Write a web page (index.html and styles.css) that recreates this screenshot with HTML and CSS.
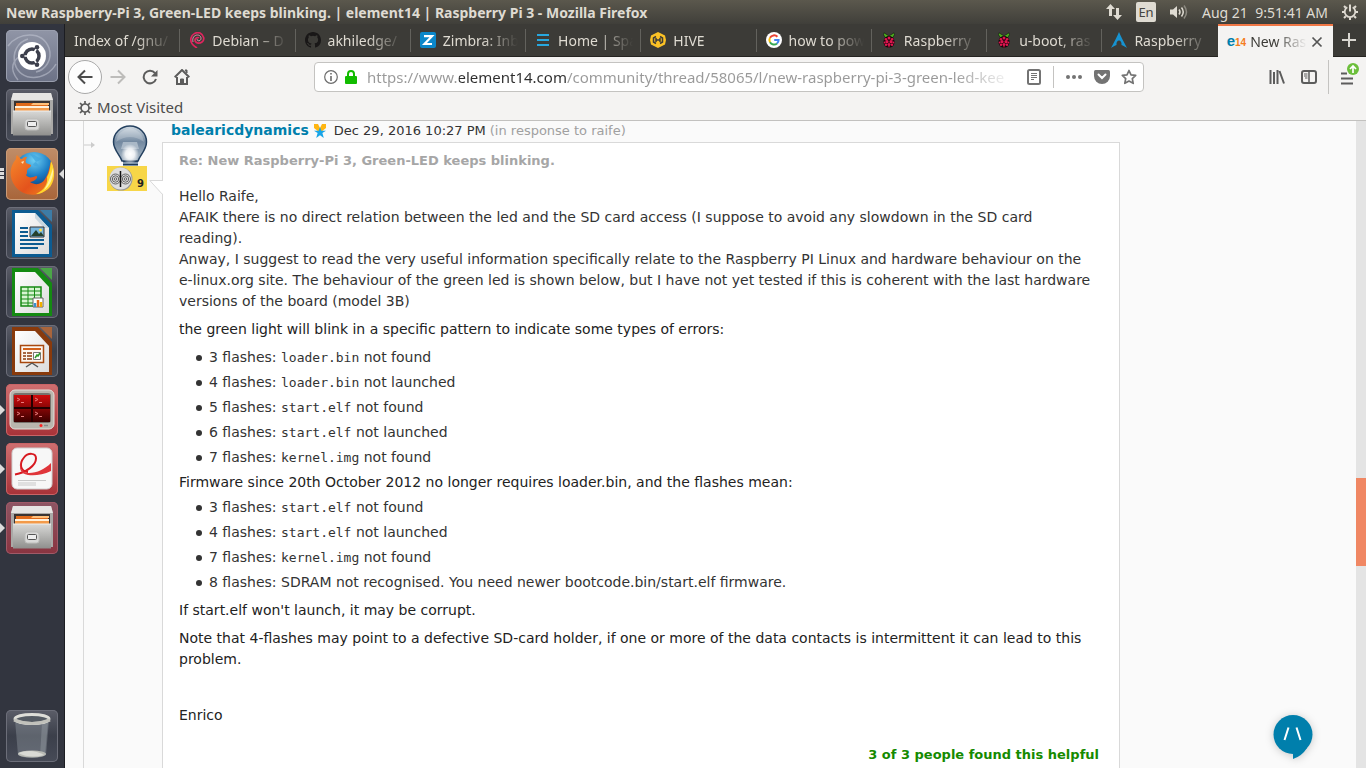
FILE: index.html
```html
<!DOCTYPE html>
<html lang="en">
<head>
<meta charset="utf-8">
<title>New Raspberry-Pi 3, Green-LED keeps blinking. | element14 | Raspberry Pi 3</title>
<link rel="stylesheet" href="styles.css">
</head>
<body>
<svg class="defs" aria-hidden="true">
  <defs>
    <linearGradient id="metal" x1="0" y1="0" x2="0" y2="1"><stop offset="0" stop-color="#d8d8d6"/><stop offset="1" stop-color="#8f8f8d"/></linearGradient>
    <linearGradient id="paper" x1="0" y1="0" x2="1" y2="1"><stop offset="0" stop-color="#fff"/><stop offset="1" stop-color="#dcdcdc"/></linearGradient>
    <radialGradient id="globe" cx=".5" cy=".2" r=".8"><stop offset="0" stop-color="#6fd0f4"/><stop offset=".5" stop-color="#1a7cc4"/><stop offset="1" stop-color="#0a2f6b"/></radialGradient>
    <linearGradient id="fox" x1="0" y1="0" x2="1" y2="1"><stop offset="0" stop-color="#f58a2c"/><stop offset=".6" stop-color="#e4531c"/><stop offset="1" stop-color="#f08a1f"/></linearGradient>
    <linearGradient id="glass" x1="0" y1="0" x2="0" y2="1"><stop offset="0" stop-color="#cfd9e2"/><stop offset=".45" stop-color="#7389a0"/><stop offset="1" stop-color="#a9b8c6"/></linearGradient>
    <radialGradient id="glow"><stop offset="0" stop-color="#fff"/><stop offset=".5" stop-color="#fff" stop-opacity=".85"/><stop offset="1" stop-color="#fff" stop-opacity="0"/></radialGradient>
    <linearGradient id="red" x1="0" y1="0" x2="0" y2="1"><stop offset="0" stop-color="#d00c0c"/><stop offset="1" stop-color="#3a0000"/></linearGradient>
  </defs>
  <symbol id="cabinet" viewBox="0 0 52 52">
    <path d="M7 4h38l2 7v34H5V11z" fill="#aaa9a7"/>
    <path d="M7 4h38l2 7H5z" fill="#e6e5e3"/>
    <path d="M8 12h36v12H8z" fill="#3a3432"/>
    <path d="M10 14h32v10H10z" fill="#e06a1a"/>
    <path d="M10 16h15l2-2h16v2H10z" fill="#ffc07a"/>
    <path d="M9 17h34v2H9z" fill="#fff1dc"/>
    <path d="M9 19h34v4H9z" fill="#f39a49"/>
    <path d="M7 22h38v24.500H7z" fill="url(#metal)"/>
    <path d="M7 22h38" stroke="#efefee"/>
    <rect x="19" y="30" width="14" height="11" rx="2.500" fill="#d9d9d8" stroke="#bdbdbb"/>
    <rect x="21.500" y="32.500" width="9" height="5" rx="1" fill="#eee" stroke="#555"/>
  </symbol>
  <symbol id="raspberry" viewBox="0 0 16 16">
    <path d="M8 4L3 .8 2.500 2.500l1.500 3 4-.5 4 .5 1.500-3L13 .8z" fill="#4cae1e" stroke="#111" stroke-width=".6"/>
    <path d="M8 4c3 0 5.500 2.500 5.500 6S11 15.700 8 15.700 2.500 13.500 2.500 10 5 4 8 4z" fill="#16060a"/>
    <g fill="#e0154f"><circle cx="8" cy="6" r="1.500"/><circle cx="4.900" cy="7.200" r="1.300"/><circle cx="11.100" cy="7.200" r="1.300"/><circle cx="6" cy="9.700" r="1.600"/><circle cx="10" cy="9.700" r="1.600"/><circle cx="3.600" cy="10.500" r=".9"/><circle cx="12.400" cy="10.500" r=".9"/><circle cx="8" cy="12.600" r="1.500"/><circle cx="5" cy="12.800" r="1.200"/><circle cx="11" cy="12.800" r="1.200"/><circle cx="8" cy="14.800" r=".7"/></g>
  </symbol>
</svg>

<header class="panel">
  <h1 class="window-title">New Raspberry-Pi 3, Green-LED keeps blinking. | element14 | Raspberry Pi 3 - Mozilla Firefox</h1>
  <div class="indicators">
    <button class="indicator" aria-label="Network"><svg width="18" height="18" viewBox="0 0 18 18" fill="#dfdbd2"><path d="M5.500 1L10 6H7v7H4V6H1z"/><path d="M12.500 17L8 12h3V5h3v7h3z"/></svg></button>
    <button class="indicator lang">En</button>
    <button class="indicator" aria-label="Sound"><svg width="20" height="16" viewBox="0 0 20 16"><path d="M1 5.500h3L8 2v12l-4-3.500H1z" fill="#dfdbd2"/><path d="M10 5.500q2 2.500 0 5M12.500 3.500q3.500 4.500 0 9" fill="none" stroke="#dfdbd2" stroke-width="1.500"/><path d="M15 1.500q5 6.500 0 13" fill="none" stroke="#8c8980" stroke-width="1.500"/></svg></button>
    <button class="indicator clock">Aug 21&nbsp; 9:51:41 AM</button>
    <button class="indicator" aria-label="System"><svg width="18" height="18" viewBox="0 0 18 18" fill="none" stroke="#dfdbd2"><path d="M6.300 4.200a5.300 5.300 0 1 0 5.400 0" stroke-width="1.800"/><path d="M9 1.500v7" stroke-width="2"/><path d="M4.800 4.800L3 3M13.200 4.800L15 3M3.600 9H1M14.400 9H17M4.800 13.200L3 15M13.200 13.200L15 15M9 14.500V17" stroke-width="2"/></svg></button>
  </div>
</header>

<div class="desktop">
  <nav class="launcher" aria-label="Launcher">
    <button class="tile tile-dash" aria-label="Search"><svg viewBox="0 0 52 52"><g fill="none" stroke="#c3c7d4" stroke-width="1.500" opacity=".55"><path d="M2 16C12 2 36 0 43 18c4 12-4 22-13 24"/><path d="M50 34C40 52 14 52 9 34 6 22 12 12 22 9"/><path d="M12 50C2 38 8 30 14 26"/></g><circle cx="26" cy="26" r="14" fill="#fff"/><circle cx="26" cy="26" r="7" fill="none" stroke="#3c3f4c" stroke-width="3.500"/><g stroke="#fff" stroke-width="1.500"><path d="M26 26h-12M26 26l6-10M26 26l6 10"/></g><circle cx="26" cy="26" r="4.500" fill="#fff"/><g fill="#3c3f4c"><circle cx="16.300" cy="26" r="2.300"/><circle cx="31" cy="17.300" r="2.300"/><circle cx="31" cy="34.700" r="2.300"/></g></svg></button>
    <button class="tile" aria-label="Files"><svg><use href="#cabinet"/></svg></button>
    <button class="tile tile-fox running3 focused" aria-label="Firefox"><svg viewBox="0 0 52 52"><circle cx="28" cy="24" r="20" fill="url(#globe)"/><path d="M24 6c6 0 6 4 12 4-2 4-8 3-9 7 4 2 7 1 9 5" fill="#3fa5de" opacity=".7"/><path d="M45 13c5 9 4 22-3 28-10 9-26 7-33-3C3 30 3 19 10 11c0-1 0-3 1-4 2 2 3 4 5 4 2-2 3-2 5-2-1 2-2 4-1 6 1 1 4 1 5 2 0 3-4 3-4 6 0 2 0 3-1 4 3 4 7 2 10 1 3 0 0 5-6 6 6 4 12 2 15-3 4-6 4-11 6-18z" fill="url(#fox)"/><path d="M45 13c5 9 4 22-3 28-4 3-8 5-12 5 9-4 12-11 11-17 3-5 3-10 4-16z" fill="#ffd52e"/><path d="M47 20c1 9-3 18-9 22 4-6 6-13 9-22z" fill="#fff3a0"/><path d="M15 14l3-1-1 3z" fill="#ffe1b5"/></svg></button>
    <button class="tile" aria-label="LibreOffice Writer"><svg viewBox="0 0 52 52"><path d="M6 3h26l14 15v32H6z" fill="#0c5b91"/><path d="M34 3h12v12z" fill="#3d7ca6"/><path d="M9 6h20l14 15v26H9z" fill="url(#paper)"/><path d="M29 6l14 15h-5L29 11z" fill="#c9d7e0"/><path d="M14 21h8M14 25h8M14 29h8M14 33h24M14 37h24M14 41h18" stroke="#0c5b91" stroke-width="2"/><path d="M24 20h14v10H24z" fill="#78b7e0" stroke="#333"/><path d="M25 29l5-6 3 4 2-2 3 4z" fill="#25412d"/><circle cx="34.500" cy="23" r="1.500" fill="#ffdd45"/></svg></button>
    <button class="tile" aria-label="LibreOffice Calc"><svg viewBox="0 0 52 52"><path d="M6 2h26l14 15v33H6z" fill="#148a12"/><path d="M34 2h12v12z" fill="#4ba648"/><path d="M9 6h20l14 15v26H9z" fill="url(#paper)"/><path d="M15 21h20v19H15z" fill="#d8f5d2" stroke="#158912" stroke-width="1.500"/><path d="M15 25h20M15 29h20M15 33h20M15 37h20M22 21v19M28.500 21v19" stroke="#158912"/><path d="M27 32h10v9H27z" fill="#fff" stroke="#666"/><path d="M29 41v-4" stroke="#3b8fd0" stroke-width="2.500"/><path d="M32 41v-7" stroke="#e66714" stroke-width="2.500"/><path d="M35 41v-5" stroke="#f0b000" stroke-width="2.500"/></svg></button>
    <button class="tile" aria-label="LibreOffice Impress"><svg viewBox="0 0 52 52"><path d="M6 2h26l14 15v33H6z" fill="#893a0c"/><path d="M34 2h12v12z" fill="#a9653c"/><path d="M9 6h20l14 15v26H9z" fill="url(#paper)"/><path d="M14.500 20.500h23v17h-23z" fill="#fdf6ef" stroke="#a8480f" stroke-width="1.500"/><path d="M17 24h18" stroke="#d2601a" stroke-width="2"/><path d="M17 28h3M17 31h3M17 34h3M21 28h5M21 31h5M21 34h5" stroke="#8a3a0c" stroke-width="1.500"/><path d="M27.500 27.500h7v7h-7z" fill="#fff" stroke="#777"/><path d="M29 33l2-3 1 1 2-3" stroke="#2e9a2b" fill="none" stroke-width="1.500"/><path d="M26 38l-6 4M26 38l6 4" stroke="#555" stroke-width="1.500"/></svg></button>
    <button class="tile tile-red running" aria-label="Terminator"><svg viewBox="0 0 52 52"><rect x="4" y="6" width="44" height="39" rx="5" fill="#b9b6ae" stroke="#e2e0da"/><rect x="7" y="9" width="38" height="30" rx="3" fill="#77736d"/><path d="M8 11h36v27H8z" fill="url(#red)"/><path d="M26 11v27M8 24h36" stroke="#240000" stroke-width="2"/><g fill="none" stroke="#e87c7c"><path d="M11 14l3 1.500-3 1.500M15 18.500h3M29 14l3 1.500-3 1.500M33 18.500h3M11 28l3 1.500-3 1.500M15 32.500h3M29 28l3 1.500-3 1.500M33 32.500h3"/></g><circle cx="35" cy="41.500" r="1.500" fill="#ff2020"/><path d="M38 41.500h4" stroke="#888" stroke-width="1.500"/></svg></button>
    <button class="tile tile-red running" aria-label="Document Viewer"><svg viewBox="0 0 52 52"><rect x="6" y="5" width="40" height="41" rx="5" fill="#f7f7f7" stroke="#cfcfcf"/><path d="M9 31.500c11-2 21-9 21-16 0-6-8-6-12-1-5 6-4 14 4 14.500" fill="none" stroke="#d71920" stroke-width="2"/><path d="M16 18c-3 6-1 12 7 12 8 0 16-4 22-10v8c-8 4-17 5-23 4-8-1-10-8-6-14z" fill="#e0353a"/><path d="M12 37.500h28M12 40h18M12 42h18" stroke="#c9c9c9"/></svg></button>
    <button class="tile tile-wine running" aria-label="File Manager"><svg><use href="#cabinet"/></svg></button>
    <button class="tile tile-trash" aria-label="Trash"><svg viewBox="0 0 52 52"><path d="M9 10l3 35c5 4 23 4 28 0l3-35z" fill="#a8b0b8" opacity=".32"/><path d="M36 13l-2 33 5-1 3-33z" fill="#bcc3c9" opacity=".25"/><ellipse cx="26" cy="44" rx="14" ry="3.500" fill="#b9bbb5"/><path d="M12 43q14-5 26 2-14 4-26-2z" fill="#d9dad5"/><ellipse cx="26" cy="9" rx="17" ry="4.500" fill="#555b63" stroke="#deded8" stroke-width="3"/><path d="M8 10q18 7 36 0" fill="none" stroke="#c1c1bb" stroke-width="3"/></svg></button>
  </nav>

  <div class="browser">
    <div class="tabs" role="tablist">
      <button class="tab" role="tab"><span class="label">Index of /gnu/</span></button>
      <button class="tab" role="tab"><svg class="fav" viewBox="0 0 16 16" fill="none" stroke="#e0245e"><path d="M8 16C3 13 1 10 2 6c1-4 5-6 9-5 4 2 5 7 2 9-3 2-7 1-7-2 0-2 3-3 4-2" stroke-width="1.700"/><path d="M4 10C3 6 5 3 8.500 3 12 3 13 7 11 8.500 9 9.500 7.500 8 8.500 7" stroke="#f4a9bf" stroke-width=".8"/></svg><span class="label">Debian – D</span></button>
      <button class="tab" role="tab"><svg class="fav" viewBox="0 0 16 16"><path fill="#191717" d="M8 0C3.580 0 0 3.580 0 8c0 3.540 2.290 6.530 5.470 7.590.4.070.55-.17.55-.38v-1.490c-2.010.37-2.530-.49-2.690-.94-.09-.23-.48-.94-.82-1.130-.28-.15-.68-.52-.01-.53.63-.01 1.080.58 1.230.82.72 1.210 1.870.87 2.330.66.07-.52.28-.87.51-1.070-1.780-.2-3.640-.89-3.640-3.950 0-.87.310-1.590.82-2.150-.08-.2-.36-1.020.08-2.120 0 0 .67-.21 2.200.82a7.600 7.600 0 0 1 4 0c1.530-1.040 2.200-.82 2.200-.82.44 1.100.16 1.920.08 2.120.51.56.82 1.270.82 2.150 0 3.070-1.870 3.750-3.650 3.950.29.25.54.73.54 1.480v2.200c0 .21.150.46.55.38A8 8 0 0 0 16 8c0-4.420-3.580-8-8-8z"/></svg><span class="label">akhiledge/</span></button>
      <button class="tab" role="tab"><svg class="fav" viewBox="0 0 16 16"><rect width="16" height="16" rx="2" fill="#0b87c9"/><path d="M4 4.200h8L4.500 12H12" fill="none" stroke="#fff" stroke-width="2.200"/></svg><span class="label">Zimbra: Inb</span></button>
      <button class="tab" role="tab"><svg class="fav" viewBox="0 0 16 16"><path d="M2 3h12M2 8h12M2 13h12" stroke="#27a7df" stroke-width="2.200"/></svg><span class="label">Home | Spa</span></button>
      <button class="tab" role="tab"><svg class="fav" viewBox="0 0 16 16"><path d="M8 0l7 3.500 1 4.500-1 4.500L8 16l-7-3.500L0 8l1-4.500z" fill="#fcc225"/><path d="M6 4.500L3.500 6v4L6 11.500M10 4.500L12.500 6v4L10 11.500M6 6v4M10 6v4M6 8h4" fill="none" stroke="#3c3b37" stroke-width="1.500"/></svg><span class="label">HIVE</span></button>
      <button class="tab" role="tab"><svg class="fav" viewBox="0 0 16 16" fill="none" stroke-width="2"><circle cx="8" cy="8" r="8" fill="#fff"/><path d="M11.400 4.800A4.600 4.600 0 0 0 4 5.800" stroke="#ea4335"/><path d="M4 5.800a4.600 4.600 0 0 0 0 4.400" stroke="#fbbc05"/><path d="M4 10.200a4.600 4.600 0 0 0 7 1.300" stroke="#34a853"/><path d="M11 11.500A4.600 4.600 0 0 0 12.600 8H8.200" stroke="#4285f4"/></svg><span class="label">how to pow</span></button>
      <button class="tab" role="tab"><svg class="fav"><use href="#raspberry"/></svg><span class="label">Raspberry</span></button>
      <button class="tab" role="tab"><svg class="fav"><use href="#raspberry"/></svg><span class="label">u-boot, ras</span></button>
      <button class="tab" role="tab"><svg class="fav" viewBox="0 0 16 16"><path d="M8 0c2 5 5 10 8 16-2-1.500-4-2.500-5.500-3 .3-3-1-4.500-2.500-4.500S5.200 10 5.500 13C4 13.500 2 14.500 0 16 3 10 6 5 8 0z" fill="#1793d1"/></svg><span class="label">Raspberry</span></button>
      <button class="tab active" role="tab" aria-selected="true"><span class="fav-e14"><b>e</b><i>14</i></span><span class="label">New Ras</span><svg class="close" width="12" height="12" viewBox="0 0 12 12"><path d="M1.500 1.500l9 9M10.500 1.500l-9 9" stroke="#555" stroke-width="1.700"/></svg></button>
      <button class="new-tab" aria-label="New tab"><svg width="14" height="14" viewBox="0 0 14 14"><path d="M7 0v14M0 7h14" stroke="#d8d6d0" stroke-width="2"/></svg></button>
    </div>

    <div class="toolbar">
      <div class="nav-buttons">
        <button class="tool back" aria-label="Back"><svg width="16" height="16" viewBox="0 0 16 16" fill="none" stroke="#4c4c4c" stroke-width="2"><path d="M15.500 8H1.500M8 1.500L1.500 8 8 14.500"/></svg></button>
        <button class="tool" aria-label="Forward"><svg width="16" height="16" viewBox="0 0 16 16" fill="none" stroke="#bdbcba" stroke-width="2"><path d="M.5 8h14M8 1.500L14.500 8 8 14.500"/></svg></button>
        <button class="tool" aria-label="Reload"><svg width="16" height="16" viewBox="0 0 16 16"><path d="M13 4.200A6.300 6.300 0 1 0 14 10" fill="none" stroke="#5c5c5c" stroke-width="2"/><path d="M15.500 1v6.500H9z" fill="#5c5c5c"/></svg></button>
        <button class="tool" aria-label="Home"><svg width="16" height="16" viewBox="0 0 16 16"><path d="M.7 8.300L8 1l7.300 7.300M3 8v7h10V8" fill="none" stroke="#5c5c5c" stroke-width="2"/><path d="M6.500 15v-5h3v5M11 1h2v3z" fill="#5c5c5c" stroke="#5c5c5c"/></svg></button>
      </div>
      <div class="urlbar">
        <svg width="14" height="14" viewBox="0 0 14 14" fill="none" stroke="#6c6c6c"><circle cx="7" cy="7" r="6.300" stroke-width="1.200"/><path d="M7 6v5M7 3v1.600" stroke-width="1.600"/></svg>
        <svg width="12" height="14" viewBox="0 0 12 14"><path d="M3 7V4a3 3 0 0 1 6 0v3" fill="none" stroke="#12bc00" stroke-width="2"/><rect y="6" width="12" height="8" rx="1" fill="#12bc00"/></svg>
        <input class="url" type="text" aria-label="Address" value="https://www.element14.com/community/thread/58065/l/new-raspberry-pi-3-green-led-kee">
        <button class="mini" aria-label="Reader view"><svg width="14" height="16" viewBox="0 0 14 16" fill="none" stroke="#737373"><rect x="1" y="1" width="12" height="14" rx="1.500" stroke-width="2"/><path d="M4 4.500h6M4 6.500h6M4 8.500h6M4 10.500h3"/></svg></button>
        <span class="divider"></span>
        <button class="mini" aria-label="Page actions"><svg width="18" height="16" viewBox="0 0 18 16" fill="#737373"><circle cx="3" cy="8" r="2"/><circle cx="9" cy="8" r="2"/><circle cx="15" cy="8" r="2"/></svg></button>
        <button class="mini" aria-label="Pocket"><svg width="16" height="14" viewBox="0 0 16 14"><path d="M1.500 0h13Q16 0 16 1.500V6a8 8 0 0 1-16 0V1.500Q0 0 1.500 0z" fill="#737373"/><path d="M4.500 4.500L8 8l3.500-3.500" fill="none" stroke="#fff" stroke-width="2" stroke-linecap="round"/></svg></button>
        <button class="mini" aria-label="Bookmark"><svg width="16" height="16" viewBox="0 0 16 16"><path d="M8 1.500l2 4.300 4.700.6-3.400 3.200.9 4.700L8 12l-4.200 2.300.9-4.700L1.300 6.400 6 5.800z" fill="none" stroke="#737373" stroke-width="1.700" stroke-linejoin="round"/></svg></button>
      </div>
      <div class="right-tools">
        <button class="mini" aria-label="Library"><svg width="16" height="14" viewBox="0 0 16 14" stroke="#5c5c5c" stroke-width="2"><path d="M1.500 0v14M5 2v12M8.500 0v14M10.500 1L15 13.500" fill="none"/></svg></button>
        <button class="mini" aria-label="Sidebars"><svg width="16" height="14" viewBox="0 0 16 14" fill="none" stroke="#5c5c5c"><rect x="1" y="1" width="14" height="12" rx="2" stroke-width="2"/><path d="M8 1v12" stroke-width="1.500"/><path d="M3 4h3.500M3 6h3.500M4 8h2.500"/></svg></button>
        <span class="divider tall"></span>
        <button class="mini menu" aria-label="Menu"><svg width="20" height="24" viewBox="0 0 20 24"><path d="M1 11.500h6M1 16.500h12M1 21.500h12" stroke="#5c5c5c" stroke-width="2"/><circle cx="13" cy="7" r="6" fill="#6cbf3c"/><path d="M13 11V4.500M10 7l3-3 3 3" fill="none" stroke="#fff" stroke-width="1.700"/></svg></button>
      </div>
    </div>

    <div class="bookmarks">
      <button class="bookmark"><svg width="14" height="14" viewBox="0 0 14 14" fill="none" stroke="#5c5c5c"><circle cx="7" cy="7" r="4" stroke-width="1.700"/><path d="M7 0v3M7 11v3M0 7h3M11 7h3M2 2l2.200 2.200M9.800 9.800L12 12M12 2L9.800 4.200M4.200 9.800L2 12" stroke-width="1.700"/></svg>Most Visited</button>
    </div>

    <div class="viewport">
      <main class="thread">
        <div class="gutter">
          <svg class="branch" width="11" height="6" viewBox="0 0 11 6"><path d="M0 3h8" stroke="#ccc"/><path d="M7 0l4 3-4 3z" fill="#ccc"/></svg>
          <div class="avatar">
            <svg width="36" height="41" viewBox="0 0 36 41"><path d="M11 34h15v7H11z" fill="#7d93a8"/><path d="M11 36.500h15M11 39.500h15" stroke="#1e3a5a"/><path d="M18 1c9.500 0 16.500 7.500 16.500 16 0 8-6.500 13-8.500 19H10C8 30 1.500 25 1.500 17 1.500 8.500 8.500 1 18 1z" fill="url(#glass)" stroke="#24405f" stroke-width="1.500"/><path d="M4 17q14-10 28 0Q30 5 18 3 6 5 4 17z" fill="#fff" opacity=".2"/><path d="M11 17h14l2 7H9z" fill="#b6c3cf" opacity=".8"/><ellipse cx="18" cy="29" rx="9" ry="10" fill="url(#glow)"/></svg>
            <div class="rank"><svg width="26" height="24" viewBox="0 0 26 24"><circle cx="14" cy="12" r="11.500" fill="#999"/><circle cx="13.500" cy="11.500" r="11" fill="#dedede"/><g fill="none" stroke="#444" stroke-width=".8"><circle cx="8.500" cy="12" r="5"/><circle cx="18.500" cy="12" r="5"/><circle cx="8.500" cy="12" r="3.200"/><circle cx="18.500" cy="12" r="3.200"/><circle cx="8.500" cy="12" r="1.300"/><circle cx="18.500" cy="12" r="1.300"/></g><path d="M13.500 4v16" stroke="#111" stroke-width="1.500"/></svg><span>9</span></div>
          </div>
        </div>
        <article class="post">
          <div class="byline">
            <a class="author" href="#">balearicdynamics</a>
            <svg width="14" height="14" viewBox="0 0 14 14"><path d="M1 0h4l2 4 2-4h4v4L8 8H6L1 4z" fill="#ffb612"/><path d="M7 3l1.300 3.700H13L9.400 9l1.400 5L7 11.300 3.200 14l1.400-5L1 6.700h4.700z" fill="#18a5e8"/></svg>
            <time class="date">Dec 29, 2016 10:27 PM</time>
            <a class="reply-to" href="#">(in response to raife)</a>
          </div>
          <div class="bubble">
            <svg class="pointer" width="15" height="16" viewBox="0 0 15 16"><path d="M15 .5H1L15 15.500z" fill="#fff"/><path d="M14 .5H.8L14 15" fill="none" stroke="#d9d9d9"/></svg>
            <h2 class="subject">Re: New Raspberry-Pi 3, Green-LED keeps blinking.</h2>
            <p class="grey">Hello Raife,<br>AFAIK there is no direct relation between the led and the SD card access (I suppose to avoid any slowdown in the SD card reading).<br>Anway, I suggest to read the very useful information specifically relate to the Raspberry PI Linux and hardware behaviour on the e-linux.org site. The behaviour of the green led is shown below, but I have not yet tested if this is coherent with the last hardware versions of the board (model 3B)</p>
            <p class="spaced">the green light will blink in a specific pattern to indicate some types of errors:</p>
            <ul class="codes spaced">
              <li>3 flashes: <code>loader.bin</code> not found</li>
              <li>4 flashes: <code>loader.bin</code> not launched</li>
              <li>5 flashes: <code>start.elf</code> not found</li>
              <li>6 flashes: <code>start.elf</code> not launched</li>
              <li>7 flashes: <code>kernel.img</code> not found</li>
            </ul>
            <p class="firmware">Firmware since 20th October 2012 no longer requires loader.bin, and the flashes mean:</p>
            <ul class="codes">
              <li>3 flashes: <code>start.elf</code> not found</li>
              <li>4 flashes: <code>start.elf</code> not launched</li>
              <li>7 flashes: <code>kernel.img</code> not found</li>
              <li>8 flashes: SDRAM not recognised. You need newer bootcode.bin/start.elf firmware.</li>
            </ul>
            <p class="spaced">If start.elf won't launch, it may be corrupt.</p>
            <p class="spaced">Note that 4-flashes may point to a defective SD-card holder, if one or more of the data contacts is intermittent it can lead to this problem.</p>
            <p class="signature">Enrico</p>
            <p class="helpful">3 of 3 people found this helpful</p>
          </div>
        </article>
      </main>
      <div class="scrollbar"><div class="thumb"></div></div>
      <button class="chat" aria-label="Chat"><svg width="40" height="45" viewBox="0 0 40 45"><circle cx="20" cy="19.500" r="19.500" fill="#007fac"/><path d="M20 36v8q9-3 14-11z" fill="#007fac"/><path d="M15.500 12.500L11.500 25M23.500 12.500L27.500 25" stroke="#fff" stroke-width="2"/></svg></button>
    </div>
  </div>
</div>
</body>
</html>
```
FILE: styles.css
```css
* { box-sizing: border-box; margin: 0; padding: 0; }
button { border: 0; background: none; font: inherit; color: inherit; }
svg { display: block; flex: none; }
a { text-decoration: none; }

body {
  height: 100vh;
  display: flex;
  flex-direction: column;
  overflow: hidden;
  font-family: "DejaVu Sans", sans-serif;
  font-size: 14px;
  line-height: 21px;
  background: #fafafa;
}
.defs { position: absolute; width: 0; height: 0; }

/* top panel */
.panel {
  flex: none;
  height: 24px;
  padding: 0 7px 0 6px;
  display: flex;
  align-items: center;
  justify-content: space-between;
  background: linear-gradient(#5b584d, #403f3a);
  color: #dfdbd2;
  font-family: "Noto Sans", sans-serif;
}
.window-title { font-size: 14px; font-weight: 700; white-space: nowrap; }
.indicators { display: flex; align-items: center; gap: 13px; }
.lang {
  width: 20px;
  height: 20px;
  border-radius: 2px;
  background: #dfdbd2;
  color: #45443f;
  font-size: 13px;
  line-height: 20px;
}
.clock { font-size: 14px; white-space: nowrap; }

.desktop { flex: 1; min-height: 0; display: flex; }

/* launcher */
.launcher {
  flex: none;
  width: 65px;
  padding: 6px 6px 6px;
  display: flex;
  flex-direction: column;
  gap: 7px;
  background: #32353f;
  border-right: 1px solid #1c1d22;
}
.tile {
  position: relative;
  width: 52px;
  height: 52px;
  flex: none;
  border-radius: 5px;
  background: linear-gradient(#5b5d68, #3b3f4a 50%, #474b57);
  box-shadow: inset 0 0 0 1px #6c6e79;
}
.tile svg { width: 52px; height: 52px; }
.tile-dash { background: linear-gradient(#9095a6, #6c7286); box-shadow: inset 0 0 0 1px #9a9fae; }
.tile-fox { background: linear-gradient(#c08d68, #a8653a); box-shadow: inset 0 0 0 1px #c99b78; }
.tile-red { background: linear-gradient(#cf6f70, #a83238); box-shadow: inset 0 0 0 1px #c96466; }
.tile-wine { background: linear-gradient(#8d5563, #8a3440); box-shadow: inset 0 0 0 1px #a05a68; }
.tile-trash { margin-top: auto; }
.running::before, .focused::after {
  content: "";
  position: absolute;
  top: 21px;
  border: 5px solid transparent;
}
.running::before { left: -6px; border-left-color: #dcdcdc; border-right-width: 0; }
.focused::after { right: -6px; border-right-color: #dcdcdc; border-left-width: 0; }
.running3::before {
  content: "";
  position: absolute;
  left: -6px;
  top: 20px;
  width: 4px;
  height: 11px;
  background: repeating-linear-gradient(#dcdcdc 0 3px, transparent 3px 4px);
}

/* browser chrome */
.browser {
  flex: 1;
  min-width: 0;
  display: flex;
  flex-direction: column;
  font-family: "Noto Sans", sans-serif;
}
.tabs { flex: none; height: 33px; display: flex; background: #3c3b37; border-bottom: 1px solid #252421; }
.tab {
  position: relative;
  flex: 1 1 0;
  min-width: 0;
  padding: 0 4px 0 9px;
  display: flex;
  align-items: center;
  gap: 7px;
  color: #dfdbd2;
  font-size: 14px;
  text-align: left;
}
.tab + .tab:not(.active)::before {
  content: "";
  position: absolute;
  left: -1px;
  top: 5px;
  bottom: 4px;
  width: 1px;
  background: #63625d;
}
.fav { width: 16px; height: 16px; }
.label {
  flex: 1;
  min-width: 0;
  overflow: hidden;
  white-space: nowrap;
  mask-image: linear-gradient(to left, transparent 4px, #000 40px);
}
.active { height: 33px; background: #f4f3f2; color: #3c3b37; border-top: 2px solid #f07746; gap: 4px; }
.active .label { mask-image: linear-gradient(to left, transparent, #000 32px); }
.fav-e14 { font-family: "Liberation Sans", sans-serif; font-size: 15px; font-weight: 700; color: #007fac; }
.fav-e14 i { font-size: 10px; font-style: normal; color: #f47c20; }
.close { margin-right: 6px; }
.new-tab { width: 33px; display: grid; place-items: center; }

.toolbar {
  flex: none;
  height: 40px;
  padding: 0 6px 0 3px;
  display: flex;
  align-items: center;
  background: #f4f3f2;
}
.nav-buttons { display: flex; align-items: center; flex: none; width: 246px; }
.tool { width: 32px; height: 32px; display: grid; place-items: center; }
.back { width: 34px; height: 34px; border: 1px solid #a9a9a9; border-radius: 50%; background: #fdfdfd; }
.urlbar {
  flex: 1;
  min-width: 0;
  height: 30px;
  padding: 0 6px 0 9px;
  display: flex;
  align-items: center;
  gap: 7px;
  border: 1px solid #c4c3c1;
  border-radius: 4px;
  background: #fff;
}
.url {
  flex: 1;
  min-width: 0;
  height: 24px;
  margin: 0 6px 0 3px;
  border: 0;
  outline: 0;
  font: 15px "Noto Sans", sans-serif;
  color: transparent;
  background: linear-gradient(to right, #999 92px, #2e2e2e 92px 199px, #999 199px calc(100% - 60px), transparent);
  -webkit-background-clip: text;
  background-clip: text;
}
.mini { display: grid; place-items: center; }
.urlbar .mini + .mini { margin-left: 4px; }
.divider { width: 1px; height: 22px; margin: 0 4px 0 5px; background: #c4c3c1; }
.right-tools { display: flex; align-items: center; justify-content: flex-end; gap: 16px; flex: none; width: 216px; }
.tall { height: 34px; margin: 0 -5px; }
.menu { margin-bottom: 6px; }

.bookmarks {
  flex: none;
  height: 24px;
  padding: 0 0 2px 13px;
  display: flex;
  align-items: center;
  background: #f4f3f2;
  border-bottom: 1px solid #c2c1bf;
}
.bookmark { display: flex; align-items: center; gap: 5px; color: #4c4c4c; font-size: 15px; }

/* page */
.viewport {
  position: relative;
  flex: 1;
  min-height: 0;
  display: flex;
  overflow: hidden;
  background: #fafafa;
  font-family: "DejaVu Sans", sans-serif;
}
.thread { flex: 1; min-width: 0; padding: 0 236px 0 18px; display: flex; }
.gutter { position: relative; flex: none; width: 79px; padding: 4px 0 0 23px; border-left: 1px solid #d9d9d9; }
.branch { position: absolute; left: 0; top: 21px; }
.avatar { width: 40px; }
.avatar > svg { margin-left: 5px; }
.rank {
  height: 25px;
  display: flex;
  align-items: center;
  background: #f7d648;
  color: #222;
  font-size: 10px;
  font-weight: 700;
}
.rank span { margin: 11px 0 0 4px; line-height: 12px; }
.post { flex: 1; min-width: 0; display: flex; flex-direction: column; }
.byline { flex: none; height: 21px; padding: 0 0 2px 9px; display: flex; align-items: center; gap: 4px; white-space: nowrap; }
.author { font-weight: 700; color: #007fac; }
.date { margin-left: 3px; font-size: 13px; color: #333; }
.reply-to { font-size: 13px; color: #a0a0a0; }
.bubble {
  position: relative;
  flex: 1 0 auto;
  padding: 7px 20px 16px 16px;
  border: 1px solid #d9d9d9;
  background: #fff;
  color: #222;
}
.pointer { position: absolute; left: -14px; top: 37px; }
.subject { margin-bottom: 15px; font-size: 13px; color: #a6a6a6; }
.grey { color: #333; }
.spaced { margin-top: 7px; }
.codes { padding-left: 30px; color: #333; list-style: none; }
.codes li { position: relative; margin-bottom: 4px; }
.codes li::before {
  content: "";
  position: absolute;
  left: -13px;
  top: 8px;
  width: 6px;
  height: 6px;
  border-radius: 50%;
  background: #333;
}
.codes code { font-family: "DejaVu Sans Mono", monospace; font-size: 13px; }
.firmware { margin-bottom: 4px; }
.signature { margin-top: 35px; }
.helpful { margin-top: 18px; font-size: 13px; font-weight: 700; color: #158a00; text-align: right; }

.scrollbar { flex: none; width: 10px; background: #e4e4e4; }
.thumb { height: 88px; margin-top: 357px; background: #f08763; }
.chat { position: absolute; right: 53px; bottom: 8px; filter: drop-shadow(0 1px 4px #0003); }
```
